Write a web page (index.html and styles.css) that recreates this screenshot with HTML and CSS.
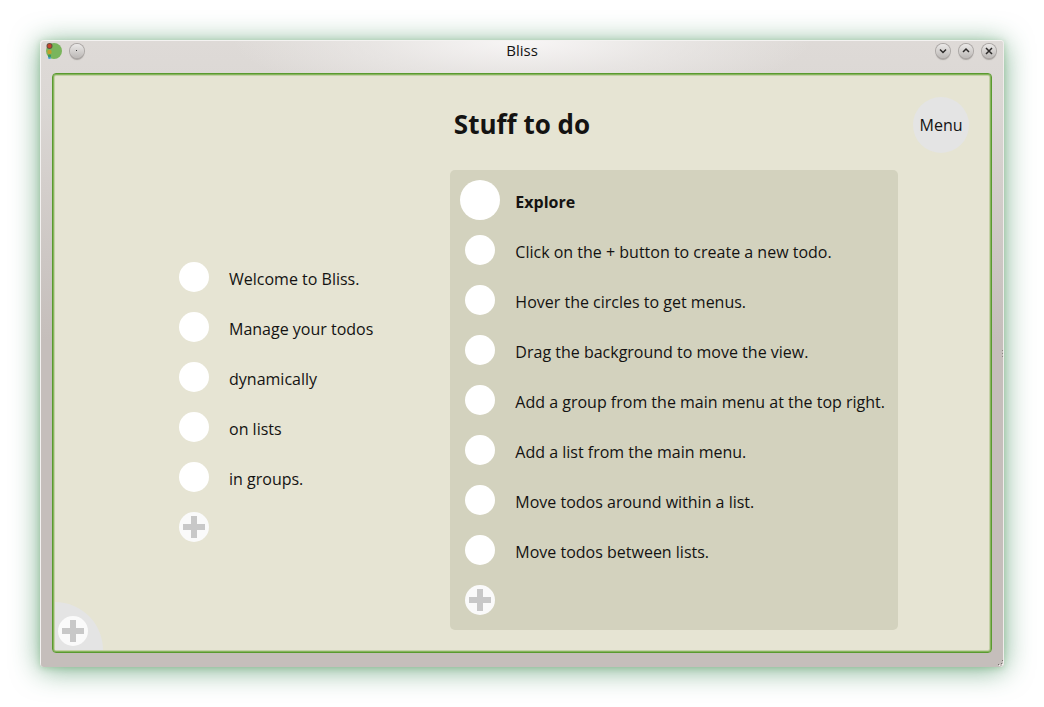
FILE: index.html
```html
<!DOCTYPE html>
<html lang="en">
<head>
<meta charset="utf-8">
<title>Bliss</title>
<link rel="stylesheet" href="styles.css">
</head>
<body>
<div class="window">
  <header class="titlebar">
    <div class="titlebar-side">
      <svg class="app-icon" width="16" height="16" viewBox="0 0 16 16" aria-hidden="true">
        <circle cx="8" cy="8" r="8" fill="#7ab55c"/>
        <circle cx="3.500" cy="14.500" r="1.500" fill="#4a9fd8"/>
        <circle cx="3.500" cy="12.800" r="1.600" fill="#3c9a58"/>
        <circle cx="3.500" cy="9" r="2.200" fill="#c0a02c"/>
        <circle cx="3.500" cy="3" r="3" fill="#66503f"/>
        <circle cx="3.500" cy="3" r="2" fill="#c8452c"/>
      </svg>
      <button class="knob" type="button" aria-label="On all desktops">
        <svg width="14" height="14" viewBox="0 0 14 14"><rect x="6" y="6" width="1" height="1" fill="#333"/></svg>
      </button>
    </div>
    <span class="window-title">Bliss</span>
    <div class="titlebar-side titlebar-end">
      <button class="knob" type="button" aria-label="Minimize">
        <svg width="14" height="14" viewBox="0 0 14 14"><path d="M4 5.500L7 8.500L10 5.500" class="glyph"/></svg>
      </button>
      <button class="knob" type="button" aria-label="Maximize">
        <svg width="14" height="14" viewBox="0 0 14 14"><path d="M4 8L7 5L10 8" class="glyph"/></svg>
      </button>
      <button class="knob" type="button" aria-label="Close">
        <svg width="14" height="14" viewBox="0 0 14 14"><path d="M4 4L10 10M10 4L4 10" class="glyph"/></svg>
      </button>
    </div>
  </header>

  <main class="canvas">
    <div class="canvas-head">
      <h1 class="board-title">Stuff to do</h1>
      <button class="menu-button" type="button">Menu</button>
    </div>

    <div class="board">
      <ul class="list loose">
        <li class="todo"><span class="marker"><input class="dot" type="checkbox" id="w1"></span><label for="w1">Welcome to Bliss.</label></li>
        <li class="todo"><span class="marker"><input class="dot" type="checkbox" id="w2"></span><label for="w2">Manage your todos</label></li>
        <li class="todo"><span class="marker"><input class="dot" type="checkbox" id="w3"></span><label for="w3">dynamically</label></li>
        <li class="todo"><span class="marker"><input class="dot" type="checkbox" id="w4"></span><label for="w4">on lists</label></li>
        <li class="todo"><span class="marker"><input class="dot" type="checkbox" id="w5"></span><label for="w5">in groups.</label></li>
        <li class="todo"><span class="marker"><button class="add" type="button" aria-label="Add todo"><svg width="22" height="22" viewBox="0 0 22 22"><path d="M8 0h6v8h8v6h-8v8h-6v-8h-8v-6h8z" fill="#c8c8c8"/></svg></button></span></li>
      </ul>

      <ul class="list group">
        <li class="todo group-name"><span class="marker"><input class="dot dot-large" type="checkbox" id="g0"></span><label for="g0">Explore</label></li>
        <li class="todo"><span class="marker"><input class="dot" type="checkbox" id="g1"></span><label for="g1">Click on the + button to create a new todo.</label></li>
        <li class="todo"><span class="marker"><input class="dot" type="checkbox" id="g2"></span><label for="g2">Hover the circles to get menus.</label></li>
        <li class="todo"><span class="marker"><input class="dot" type="checkbox" id="g3"></span><label for="g3">Drag the background to move the view.</label></li>
        <li class="todo"><span class="marker"><input class="dot" type="checkbox" id="g4"></span><label for="g4">Add a group from the main menu at the top right.</label></li>
        <li class="todo"><span class="marker"><input class="dot" type="checkbox" id="g5"></span><label for="g5">Add a list from the main menu.</label></li>
        <li class="todo"><span class="marker"><input class="dot" type="checkbox" id="g6"></span><label for="g6">Move todos around within a list.</label></li>
        <li class="todo"><span class="marker"><input class="dot" type="checkbox" id="g7"></span><label for="g7">Move todos between lists.</label></li>
        <li class="todo"><span class="marker"><button class="add" type="button" aria-label="Add todo to Explore"><svg width="22" height="22" viewBox="0 0 22 22"><path d="M8 0h6v8h8v6h-8v8h-6v-8h-8v-6h8z" fill="#c8c8c8"/></svg></button></span></li>
      </ul>
    </div>

    <div class="corner">
      <button class="add" type="button" aria-label="Add list"><svg width="22" height="22" viewBox="0 0 22 22"><path d="M8 0h6v8h8v6h-8v8h-6v-8h-8v-6h8z" fill="#c8c8c8"/></svg></button>
    </div>
  </main>

  <svg class="grip grip-side" width="3" height="8" viewBox="0 0 3 8" aria-hidden="true"><path d="M1 0h1v1h-1zM1 3h1v1h-1zM1 6h1v1h-1z" fill="#8c8683"/><path d="M2 1h1v1h-1zM2 4h1v1h-1zM2 7h1v1h-1z" fill="#f4f2f1"/></svg>
  <svg class="grip grip-corner" width="7" height="7" viewBox="0 0 7 7" aria-hidden="true"><path d="M5 0h1v1h-1zM4 3h1v1h-1zM1 4h1v1h-1z" fill="#746f6c"/><path d="M6 1h1v1h-1zM5 4h1v1h-1zM2 5h1v1h-1z" fill="#f4f2f1"/></svg>
</div>
</body>
</html>
```
FILE: styles.css
```css
* {
  box-sizing: border-box;
}

body {
  margin: 0;
  min-height: 100vh;
  padding: 40px;
  display: flex;
  background: #fff;
  color: #141312;
  font: 16px/24px "Open Sans", "Noto Sans", sans-serif;
}

button {
  padding: 0;
  border: 0;
  font: inherit;
  color: inherit;
}

svg {
  display: block;
}

.window {
  position: relative;
  flex: 1;
  display: flex;
  flex-direction: column;
  padding: 0 12px 14px;
  border-radius: 4px;
  background:
    radial-gradient(ellipse 290px 64px at 50% 0, #f8f6f6, rgba(240, 238, 237, 0.6) 50%, rgba(222, 218, 215, 0)) no-repeat,
    linear-gradient(#dedad7, #dbd7d4 64px, #c5bebb 300px, #c5bebb);
  box-shadow:
    inset 1px 1px #f4f2f1,
    inset -1px 0 #efeceb,
    0 1px 6px rgba(95, 165, 95, 0.35),
    0 3px 28px rgba(50, 130, 80, 0.65);
}

.titlebar {
  display: grid;
  grid-template-columns: 1fr auto 1fr;
  align-items: center;
  height: 33px;
  margin: 0 -6px;
  padding-bottom: 12px;
}

.titlebar-side {
  display: flex;
  align-items: center;
  gap: 9px;
}

.titlebar-end {
  justify-content: flex-end;
  padding-right: 2px;
}

.titlebar-side .app-icon {
  margin-right: -1px;
}

.window-title {
  padding-bottom: 2px;
  font-size: 15px;
  line-height: 20px;
}

.knob {
  width: 14px;
  height: 14px;
  border-radius: 50%;
  background: linear-gradient(#ebe9e8, #bcb8b6);
  box-shadow: 0 0 0 1px #aaa6a4, 0 2px 1px rgba(90, 85, 80, 0.4);
}

.glyph {
  fill: none;
  stroke: #2c2a29;
  stroke-width: 1.5;
}

.canvas {
  position: relative;
  flex: 1;
  display: flex;
  flex-direction: column;
  padding: 1px;
  border: 1px solid #5a9a30;
  border-radius: 4px;
  background: #e6e4d3;
  box-shadow:
    inset 0 0 0 1px #86b45c,
    inset 0 0 0 2px #c3d0a6;
}

.canvas-head {
  display: grid;
  grid-template-columns: 1fr auto 1fr;
  align-items: center;
  padding: 22px 21px 0;
}

.board-title {
  grid-column: 2;
  margin: 0;
  padding-bottom: 2px;
  font-size: 26px;
  line-height: 36px;
}

.menu-button {
  justify-self: end;
  width: 56px;
  height: 56px;
  border-radius: 50%;
  background: #e4e4e4;
}

.board {
  display: flex;
  justify-content: center;
  align-items: center;
  gap: 77px;
  padding: 17px 0 20px 28px;
}

.list {
  margin: 0;
  padding: 0;
  list-style: none;
}

.loose {
  padding-top: 4px;
}

.group {
  padding: 5px 13px 5px 10px;
  border-radius: 5px;
  background: #d3d2be;
}

.todo {
  display: flex;
  align-items: center;
  gap: 15px;
  height: 50px;
}

.todo label {
  padding-top: 4px;
}

.group-name {
  font-weight: 700;
}

.marker {
  display: flex;
  justify-content: center;
  width: 40px;
}

.dot {
  appearance: none;
  width: 30px;
  height: 30px;
  margin: 0;
  border-radius: 50%;
  background: #fff;
}

.dot-large {
  width: 40px;
  height: 40px;
}

.add {
  display: grid;
  place-items: center;
  width: 30px;
  height: 30px;
  border-radius: 50%;
  background: #fafafa;
}

.corner {
  position: absolute;
  left: 2px;
  bottom: 2px;
  width: 48px;
  height: 48px;
  padding: 14px 3px 4px;
  border-top-right-radius: 100%;
  background: #e4e4e4;
}

.grip {
  position: absolute;
  right: 0;
}

.grip-side {
  top: 50%;
  transform: translateY(-50%);
}

.grip-corner {
  bottom: 0;
}
```
